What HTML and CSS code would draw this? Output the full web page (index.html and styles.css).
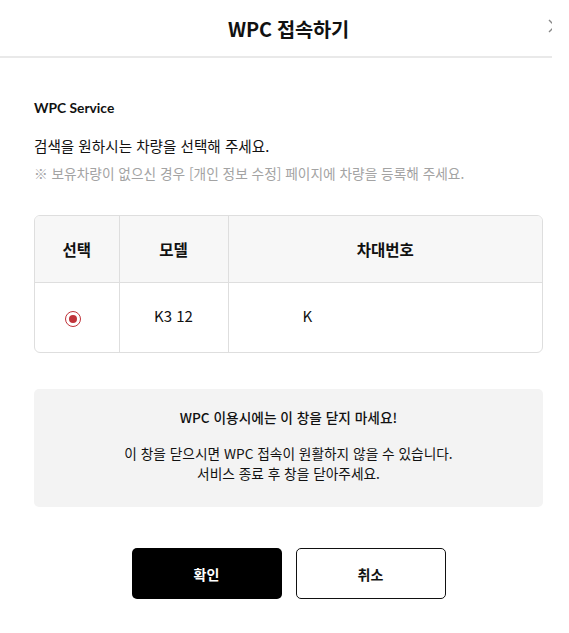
FILE: index.html
```html
<!DOCTYPE html>
<html lang="ko">
<head>
    <meta charset="UTF-8">
    <meta name="viewport" content="width=device-width, initial-scale=1.0">
    <title>WPC 접속하기</title>
    <link rel="stylesheet" href="styles.css">
</head>
<body>
    <!-- Finestra visibile: il popup è più largo e viene tagliato a destra -->
    <div class="viewport">
        <div class="popup">
            <div class="popup-header">
                <h1>WPC 접속하기</h1>
                <button class="btn-close" type="button" aria-label="닫기">
                    <svg width="16" height="16" viewBox="0 0 16 16"><path d="M2 2 L14 14 M14 2 L2 14" stroke="#888" stroke-width="1.4" fill="none"/></svg>
                </button>
            </div>

            <div class="popup-body">
                <h2 class="section-title">WPC Service</h2>
                <p class="desc">검색을 원하시는 차량을 선택해 주세요.</p>
                <p class="note">※ 보유차량이 없으신 경우 [개인 정보 수정] 페이지에 차량을 등록해 주세요.</p>

                <!-- Tabella dei veicoli -->
                <div class="table-wrap">
                    <table class="car-table">
                        <colgroup>
                            <col class="col-select">
                            <col class="col-model">
                            <col>
                        </colgroup>
                        <thead>
                            <tr>
                                <th>선택</th>
                                <th>모델</th>
                                <th>차대번호</th>
                            </tr>
                        </thead>
                        <tbody>
                            <tr>
                                <td><span class="radio checked"></span></td>
                                <td>K3 12</td>
                                <td class="vin">K</td>
                            </tr>
                        </tbody>
                    </table>
                </div>

                <!-- Avviso -->
                <div class="notice">
                    <p class="notice-title">WPC 이용시에는 이 창을 닫지 마세요!</p>
                    <p>이 창을 닫으시면 WPC 접속이 원활하지 않을 수 있습니다.<br>서비스 종료 후 창을 닫아주세요.</p>
                </div>

                <div class="buttons">
                    <button type="button" class="btn btn-primary">확인</button>
                    <button type="button" class="btn btn-line">취소</button>
                </div>
            </div>
        </div>
    </div>
</body>
</html>
```

FILE: styles.css
```css
/* Stili di base */
body {
    margin: 0;
    padding: 0;
    background: #fff;
    font-family: "Noto Sans CJK KR", "Noto Sans", sans-serif;
    color: #111;
    overflow: hidden;
}

p, h1, h2 {
    margin: 0;
}

.viewport {
    width: 552px;
    overflow: hidden;
}

.popup {
    width: 577px;
    background: #fff;
}

/* Intestazione */
.popup-header {
    position: relative;
    height: 56px;
    border-bottom: 2px solid #e9e9e9;
    display: flex;
    align-items: center;
    justify-content: center;
}

.popup-header h1 {
    font-size: 19.8px;
    font-weight: 700;
    letter-spacing: -0.2px;
}

.btn-close {
    position: absolute;
    right: 14px;
    top: 18px;
    border: none;
    background: none;
    padding: 0;
    width: 16px;
    height: 16px;
}

.btn-close svg {
    display: block;
}

/* Corpo */
.popup-body {
    padding: 40px 34px 0;
}

.section-title {
    font-family: "Lato", "Noto Sans CJK KR", sans-serif;
    font-size: 13.8px;
    font-weight: 700;
    line-height: 20px;
}

.desc {
    margin-top: 18px;
    font-size: 14.6px;
    line-height: 20px;
}

.note {
    margin-top: 7px;
    font-size: 13.7px;
    line-height: 20px;
    color: #a3a3a3;
}

/* Tabella */
.table-wrap {
    margin-top: 32px;
    border: 1px solid #dedede;
    border-radius: 6px;
    overflow: hidden;
}

.car-table {
    width: 100%;
    border-collapse: collapse;
}

.col-select {
    width: 84px;
}

.col-model {
    width: 109px;
}

.car-table th {
    background: #f7f7f7;
    height: 66px;
    font-size: 15.5px;
    font-weight: 700;
    border-bottom: 1px solid #dedede;
    padding: 0;
}

.car-table td {
    height: 65px;
    font-size: 15px;
    text-align: center;
    padding: 0 0 4px;
}

.car-table th + th,
.car-table td + td {
    border-left: 1px solid #dedede;
}

.car-table td.vin {
    text-align: left;
    padding-left: 74px;
}

.radio {
    display: inline-block;
    width: 14px;
    height: 14px;
    border: 1.5px solid #c0333a;
    border-radius: 50%;
    position: relative;
    top: 5px;
    left: -4px;
}

.radio.checked::after {
    content: "";
    position: absolute;
    left: 3px;
    top: 3px;
    width: 8px;
    height: 8px;
    border-radius: 50%;
    background: #c0333a;
}

/* Avviso */
.notice {
    margin-top: 36px;
    background: #f3f3f3;
    border-radius: 5px;
    padding: 18px 20px 24px;
    text-align: center;
    font-size: 13.7px;
    line-height: 20px;
}

.notice-title {
    font-weight: 500;
    margin-bottom: 16px;
}

/* Bottoni */
.buttons {
    margin-top: 41px;
    display: flex;
    justify-content: center;
    gap: 14px;
}

.btn {
    width: 150px;
    height: 51px;
    border-radius: 5px;
    font-family: "Noto Sans CJK KR", sans-serif;
    font-size: 14px;
    font-weight: 700;
    cursor: pointer;
}

.btn-primary {
    background: #000;
    color: #fff;
    border: none;
}

.btn-line {
    background: #fff;
    color: #111;
    border: 1px solid #111;
}
```
